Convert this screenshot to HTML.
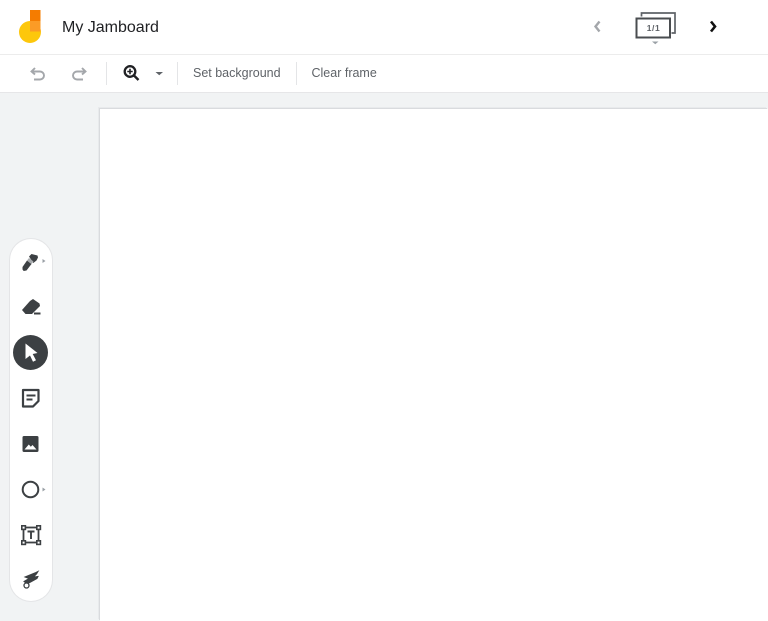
<!DOCTYPE html>
<html><head><meta charset="utf-8"><style>
html,body{margin:0;padding:0;width:768px;height:621px;overflow:hidden;background:#f1f3f4;font-family:"Liberation Sans",sans-serif}
#w{position:absolute;left:0;top:0;width:768px;height:621px;filter:blur(.35px)}
.a{position:absolute}
svg{position:absolute;overflow:visible}
</style></head><body><div id="w">
<div class="a" style="left:0;top:0;width:768px;height:93px;background:#fff"></div>
<div class="a" style="left:0;top:54px;width:768px;height:1px;background:#ececec"></div>
<div class="a" style="left:0;top:92px;width:768px;height:1px;background:#e6e6e8"></div>
<div class="a" style="left:100px;top:109px;width:668px;height:512px;background:#fff;box-shadow:-1px -1px 0 #d9dbde,-2px -2px 0 #e8eaec"></div>

<!-- logo -->
<svg style="left:0;top:0" width="60" height="50">
<circle cx="30" cy="32" r="11" fill="#fdc70c"/>
<rect x="30" y="10" width="10.500" height="11" fill="#f57c00"/>
<rect x="30" y="21" width="10.500" height="10.500" fill="#fb9b26"/>
</svg>
<div class="a" style="left:62px;top:18px;font-size:16px;line-height:20px;color:#202124;white-space:nowrap">My Jamboard</div>

<!-- toolbar -->
<svg style="left:0;top:55px" width="400" height="37">
<g fill="none" stroke="#a4a7ab" stroke-width="1.900">
<path d="M35 13l-3.500 3.500 3.500 3M32 16.500h8a3.500 3.500 0 0 1 0 8h-6"/>
<path d="M82 13l3.500 3.500-3.500 3M85 16.500h-8a3.500 3.500 0 0 0 0 8h6"/>
</g>
<g fill="none" stroke="#202124">
<circle cx="130" cy="16.500" r="5.300" stroke-width="2.300"/>
<path d="M134 20.500l4.500 4.500" stroke-width="2.400"/>
<path d="M127.300 16.500h5.400M130 13.800v5.400" stroke-width="1.600"/>
</g>
<path d="M155.500 17h7.500l-3.750 3.200z" fill="#5f6368"/>
<rect x="106" y="7" width="1" height="23" fill="#e4e5e7"/>
<rect x="177" y="7" width="1" height="23" fill="#e4e5e7"/>
<rect x="296" y="7" width="1" height="23" fill="#e4e5e7"/>
</svg>
<div class="a" style="left:193px;top:65px;font-size:12.500px;line-height:16px;color:#5f6368;white-space:nowrap">Set background</div>
<div class="a" style="left:311.500px;top:65px;font-size:12.500px;line-height:16px;color:#5f6368;white-space:nowrap">Clear frame</div>

<!-- frame nav -->
<svg style="left:570px;top:0" width="198" height="50">
<path d="M29.500 21.500l-4 5 4 5" fill="none" stroke="#a4a7ab" stroke-width="2.400"/>
<path d="M141 21.500l4 5-4 5" fill="none" stroke="#111" stroke-width="2.600"/>
<path d="M71.500 16.500v-3.500h33.500v20h-3.500" fill="none" stroke="#5f6368" stroke-width="1.700"/>
<rect x="66.500" y="18.500" width="33.500" height="19" fill="#fff" stroke="#4a4d50" stroke-width="2"/>
<path d="M82 41.500h6.500l-3.250 2.700z" fill="#9aa0a6"/>
</svg>
<div class="a" style="left:636px;top:22px;width:35px;text-align:center;font-size:8.500px;line-height:12px;color:#5f6368;letter-spacing:.6px;font-weight:bold">1/1</div>

<!-- tool rail -->
<div class="a" style="left:10px;top:239px;width:42px;height:362px;background:#fff;border-radius:21px;box-shadow:0 0 0 1px #e4e5e7"></div>
<div class="a" style="left:13px;top:335px;width:35px;height:35px;border-radius:50%;background:#3c4043"></div>
<svg style="left:0;top:0" width="60" height="621">
<!-- pen -->
<path d="M22.500 267l4.500-6.500 4.500 3.500-5 6.500-2.800 .5-1.200-1.500z" fill="#3c4043"/>
<path d="M29 256.500l2.500-2.500 6 1.500.5 2-1.500 3-3.200 2.500z" fill="#3c4043"/>
<path d="M27 260.500l2-2.500 4.500 3.500-2 2.500z" fill="#a8abae"/>
<path d="M42.500 259l3 2-3 2z" fill="#9aa0a6"/>
<!-- eraser -->
<path d="M22 310l8-9 3-2 6.500 4.500.5 2.500-8 8h-6.500z" fill="#3c4043"/>
<rect x="34" y="312.500" width="6.500" height="2" fill="#3c4043"/>
<!-- cursor -->
<path d="M25.500 343.500l12 9.500-4.800 1 3.300 6.300-3 1.500-3-6.300-4.500 3.500z" fill="#fff"/>
<!-- note -->
<path d="M23 390h15.500v11l-5.500 5.500H23z" fill="none" stroke="#3c4043" stroke-width="2.200" stroke-linejoin="round"/>
<path d="M26.500 395.500h9M26.500 399.500h6" stroke="#3c4043" stroke-width="2"/>
<!-- image -->
<rect x="22.500" y="436" width="16" height="16" rx="1.500" fill="#3c4043"/>
<path d="M24.500 449.500l4.300-5 2 2.300 1.700-1.800 4 4.500z" fill="#fff"/>
<!-- circle -->
<circle cx="30.500" cy="489.500" r="7.800" fill="none" stroke="#3c4043" stroke-width="2"/>
<path d="M42.500 487.500l3 2-3 2z" fill="#9aa0a6"/>
<!-- text box -->
<rect x="23.500" y="527.500" width="15" height="15" fill="none" stroke="#3c4043" stroke-width="1.800"/>
<g fill="#fff" stroke="#3c4043" stroke-width="1.600">
<rect x="21.800" y="525.800" width="3.600" height="3.600"/><rect x="36.800" y="525.800" width="3.600" height="3.600"/>
<rect x="21.800" y="540.800" width="3.600" height="3.600"/><rect x="36.800" y="540.800" width="3.600" height="3.600"/>
</g>
<path d="M27.500 531.500h7M31 531.500v7.500" fill="none" stroke="#3c4043" stroke-width="1.900"/>
<!-- laser -->
<path d="M25 577l11-4.500 2-1-1.500 2.500-3 3 4.500-.5-1 2-10 5.500-3-2.500 5-3z" fill="#3c4043" stroke="#3c4043" stroke-width="1"/>
<circle cx="26.500" cy="585.500" r="2.500" fill="#fff" stroke="#3c4043" stroke-width="1.300"/>
</svg>
</div></body></html>
